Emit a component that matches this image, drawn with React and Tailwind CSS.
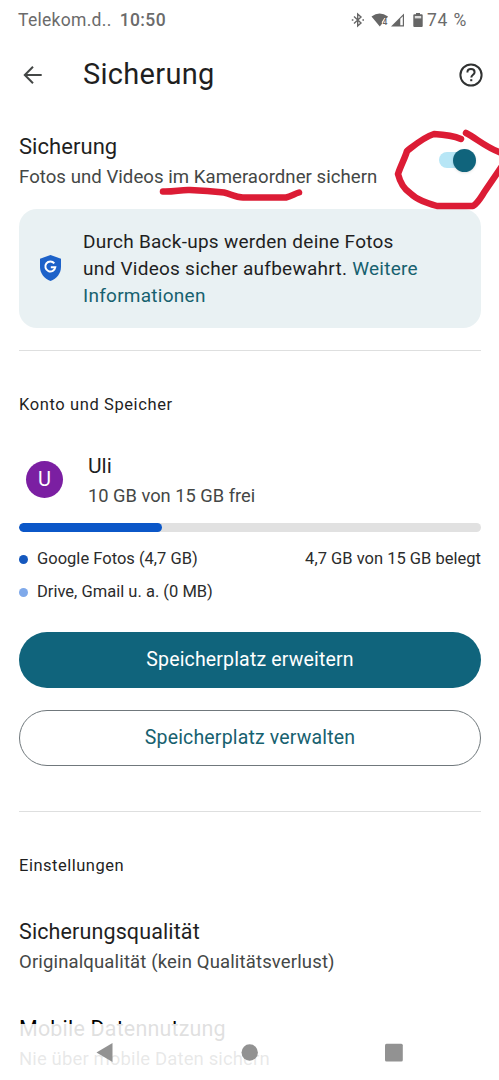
import React from 'react';

const StatusBar = () => (
  <div className="flex h-10 items-center justify-between pl-[18px] pr-8 text-[17.5px] text-[#6b6b6b]">
    <div className="flex items-center gap-2">
      <span className="tracking-[0.3px]">Telekom.d..</span>
      <span className="font-medium tracking-[0.4px]">10:50</span>
    </div>
    <div className="flex items-center">
      <svg width="14" height="16" viewBox="0 0 14 16" className="mr-[6px]" fill="none" stroke="#666" strokeWidth="1.4">
        <path d="M3 4.5L10 11L6.7 14V2L10 5L3 11.5" />
        <path d="M0.8 8h1.6M11.4 8h1.6" />
      </svg>
      <svg width="34" height="16" viewBox="0 0 34 16" className="mr-[8px]">
        <path d="M0.5 4.6Q8.5 -1.4 17 4.6L16 6H13.4L10.8 10L11 11.8L8.8 14.5Z" fill="#666" />
        <text x="11.6" y="13" fontSize="8.5" fontWeight="500" fill="#666">4</text>
        <path d="M20 14.5L33 1.5V14.5Z" fill="#666" />
        <path d="M29.3 6.8L31.8 4.2V13.3H29.3Z" fill="#fff" />
      </svg>
      <svg width="10" height="16" viewBox="0 0 10 16" className="mr-1">
        <path d="M3 1h4v1.3h1.7q1 0 1 1V14q0 1-1 1H1.3q-1 0-1-1V3.3q0-1 1-1H3Z" fill="#666" />
        <path d="M1.8 4h6.4v2.4H1.8Z" fill="#ddd" />
      </svg>
      <span className="tracking-[0.8px]">74 %</span>
    </div>
  </div>
);

const Header = () => (
  <div className="flex h-[70px] items-center pl-[23px] pr-[16px]">
    <svg width="20" height="20" viewBox="0 0 20 20" fill="none" stroke="#444746" strokeWidth="2">
      <path d="M18.7 10H2.3M10 1.8L1.8 10L10 18.2" />
    </svg>
    <h1 className="ml-[40px] text-[29px] tracking-[0.3px] text-[#1f1f1f]">Sicherung</h1>
    <svg width="24" height="24" viewBox="0 0 24 24" className="ml-auto" fill="none" stroke="#303232" strokeWidth="2">
      <circle cx="12" cy="12" r="10.6" />
      <path d="M8.4 9.5C8.4 7.4 10 6.1 12 6.1C14.1 6.1 15.6 7.5 15.6 9.3C15.6 11.7 12.3 11.8 12.3 14.5" />
      <path d="M11.2 17.2h2.1" />
    </svg>
  </div>
);

const BackupSwitch = () => (
  <div className="relative flex h-6 w-[37px] items-center">
    <div className="h-4 w-8 rounded-full bg-[#b7e6f6]" />
    <div className="absolute right-0 h-[23px] w-[23px] rounded-full bg-[#10647c] shadow-sm" />
  </div>
);

const Markings = () => (
  <svg width="499" height="100" viewBox="0 120 499 100" className="pointer-events-none absolute left-0 top-[120px]" fill="none" stroke="#dc1c35" strokeWidth="6.5" strokeLinecap="round" strokeLinejoin="round">
    <path d="M163 191.5C174 192 181 189.5 190 190C203 190.5 215 191.5 224 192.5C231 194 235 197.5 243 197.5H286C291 196.5 294 194 299 192.5" />
    <path d="M461 139C453 135.5 443 134.5 434 134C424 137 416 144 407 151C405 158 401 165 398 174C400 182 404 189 410 193C417 200 427 203 437 206H473C478 203 481 197 485 191L502 166" />
    <path d="M466 133C476 138 488 149 502 153" />
  </svg>
);

const InfoCard = () => (
  <div className="mt-3 flex h-[119px] items-center rounded-[18px] bg-[#e9f1f3] pl-[21px]">
    <svg width="21" height="26" viewBox="0 0 21 26" className="mb-[2px] shrink-0">
      <path d="M10.5 0L21 3.8V11.8C21 18.5 16.8 23.8 10.5 26C4.2 23.8 0 18.5 0 11.8V3.8Z" fill="#1d62c9" />
      <path d="M14.3 8.4A5 5 0 1 0 15.3 12.2H10.8" fill="none" stroke="#fff" strokeWidth="2" />
    </svg>
    <p className="ml-[22px] text-[19px] leading-[27px] tracking-[0.26px] text-[#1f1f1f]">
      Durch Back-ups werden deine Fotos
      <br />
      und Videos sicher aufbewahrt. <span className="text-[#17616f]">Weitere</span>
      <br />
      <span className="text-[#17616f]">Informationen</span>
    </p>
  </div>
);

const Storage = () => (
  <div>
    <div className="mt-[32px] flex h-[60px] items-center">
      <div className="ml-[7px] flex h-[37px] w-[37px] items-center justify-center rounded-full bg-[#7b1fa2] text-xl text-white">U</div>
      <div className="ml-[25px] pt-1">
        <div className="text-[21px] leading-[29px] text-[#1f1f1f]">Uli</div>
        <div className="text-[18.3px] leading-[30px] text-[#444746]">10 GB von 15 GB frei</div>
      </div>
    </div>
    <div className="mt-[14px] h-[9px] overflow-hidden rounded-full bg-[#e1e1e1]">
      <div className="h-full w-[31%] rounded-full bg-[#0b57c8]" />
    </div>
    <div className="mt-[10px] flex h-[34px] items-center text-[16.5px] tracking-[0.01px] text-[#2b2c2c]">
      <span className="mr-[9px] h-[9px] w-[9px] rounded-full bg-[#1558be]" />
      <span>Google Fotos (4,7 GB)</span>
      <span className="ml-auto">4,7 GB von 15 GB belegt</span>
    </div>
    <div className="flex h-[33px] items-center text-[16.5px] tracking-[0.01px] text-[#2b2c2c]">
      <span className="mr-[9px] h-[9px] w-[9px] rounded-full bg-[#7fa9ea]" />
      <span>Drive, Gmail u. a. (0 MB)</span>
    </div>
  </div>
);

const NavBar = () => (
  <div className="absolute bottom-0 left-0 h-[56px] w-full bg-white/88">
    <svg width="499" height="56" viewBox="0 1024 499 56" fill="#929292">
      <path d="M96.5 1052.5L112.5 1043V1062Z" />
      <circle cx="249.7" cy="1052.5" r="8.2" />
      <rect x="385" y="1043.8" width="17.8" height="17.6" rx="1.5" />
    </svg>
  </div>
);

const App = () => (
  <div className="relative h-[1080px] w-[499px] overflow-hidden bg-white font-['Roboto',sans-serif]">
    <StatusBar />
    <Header />
    <main className="pl-[19px] pr-[18px]">
      <div className="flex h-[87px] items-center justify-between pr-[5px] pt-[15px]">
        <div className="pt-px">
          <h2 className="text-[22px] leading-[30px] tracking-[0.05px] text-[#1f1f1f]">Sicherung</h2>
          <p className="text-[18.6px] leading-[30px] tracking-[0.04px] text-[#444746]">Fotos und Videos im Kameraordner sichern</p>
        </div>
        <div className="mb-[3px] self-end pb-[22px]">
          <BackupSwitch />
        </div>
      </div>
      <InfoCard />
      <div className="mt-[22px] h-px bg-[#dedfdf]" />
      <h3 className="mt-[42px] text-[16.5px] leading-6 tracking-[0.6px] text-[#1f1f1f]">Konto und Speicher</h3>
      <Storage />
      <button className="mt-[23px] block h-[56px] w-full rounded-full bg-[#10647c] text-[19.5px] tracking-[0.16px] text-white">Speicherplatz erweitern</button>
      <button className="mt-[22px] block h-[56px] w-full rounded-full border border-[#70787c] text-[19.5px] tracking-[0.16px] text-[#17616f]">Speicherplatz verwalten</button>
      <div className="mt-[45px] h-px bg-[#dedfdf]" />
      <h3 className="mt-[42px] text-[16.5px] leading-6 tracking-[0.5px] text-[#1f1f1f]">Einstellungen</h3>
      <div className="mt-[39px] h-[97px]">
        <div className="text-[21.5px] leading-[30px] tracking-[0.12px] text-[#1f1f1f]">Sicherungsqualität</div>
        <div className="text-[18.5px] leading-[30px] tracking-[0.15px] text-[#444746]">Originalqualität (kein Qualitätsverlust)</div>
      </div>
      <div className="text-[21.5px] leading-[30px] tracking-[0.17px] text-black">Mobile Datennutzung</div>
      <div className="text-[18.5px] leading-[30px] tracking-[0.13px] text-[#444746]">Nie über mobile Daten sichern</div>
    </main>
    <Markings />
    <NavBar />
  </div>
);

export default App;
